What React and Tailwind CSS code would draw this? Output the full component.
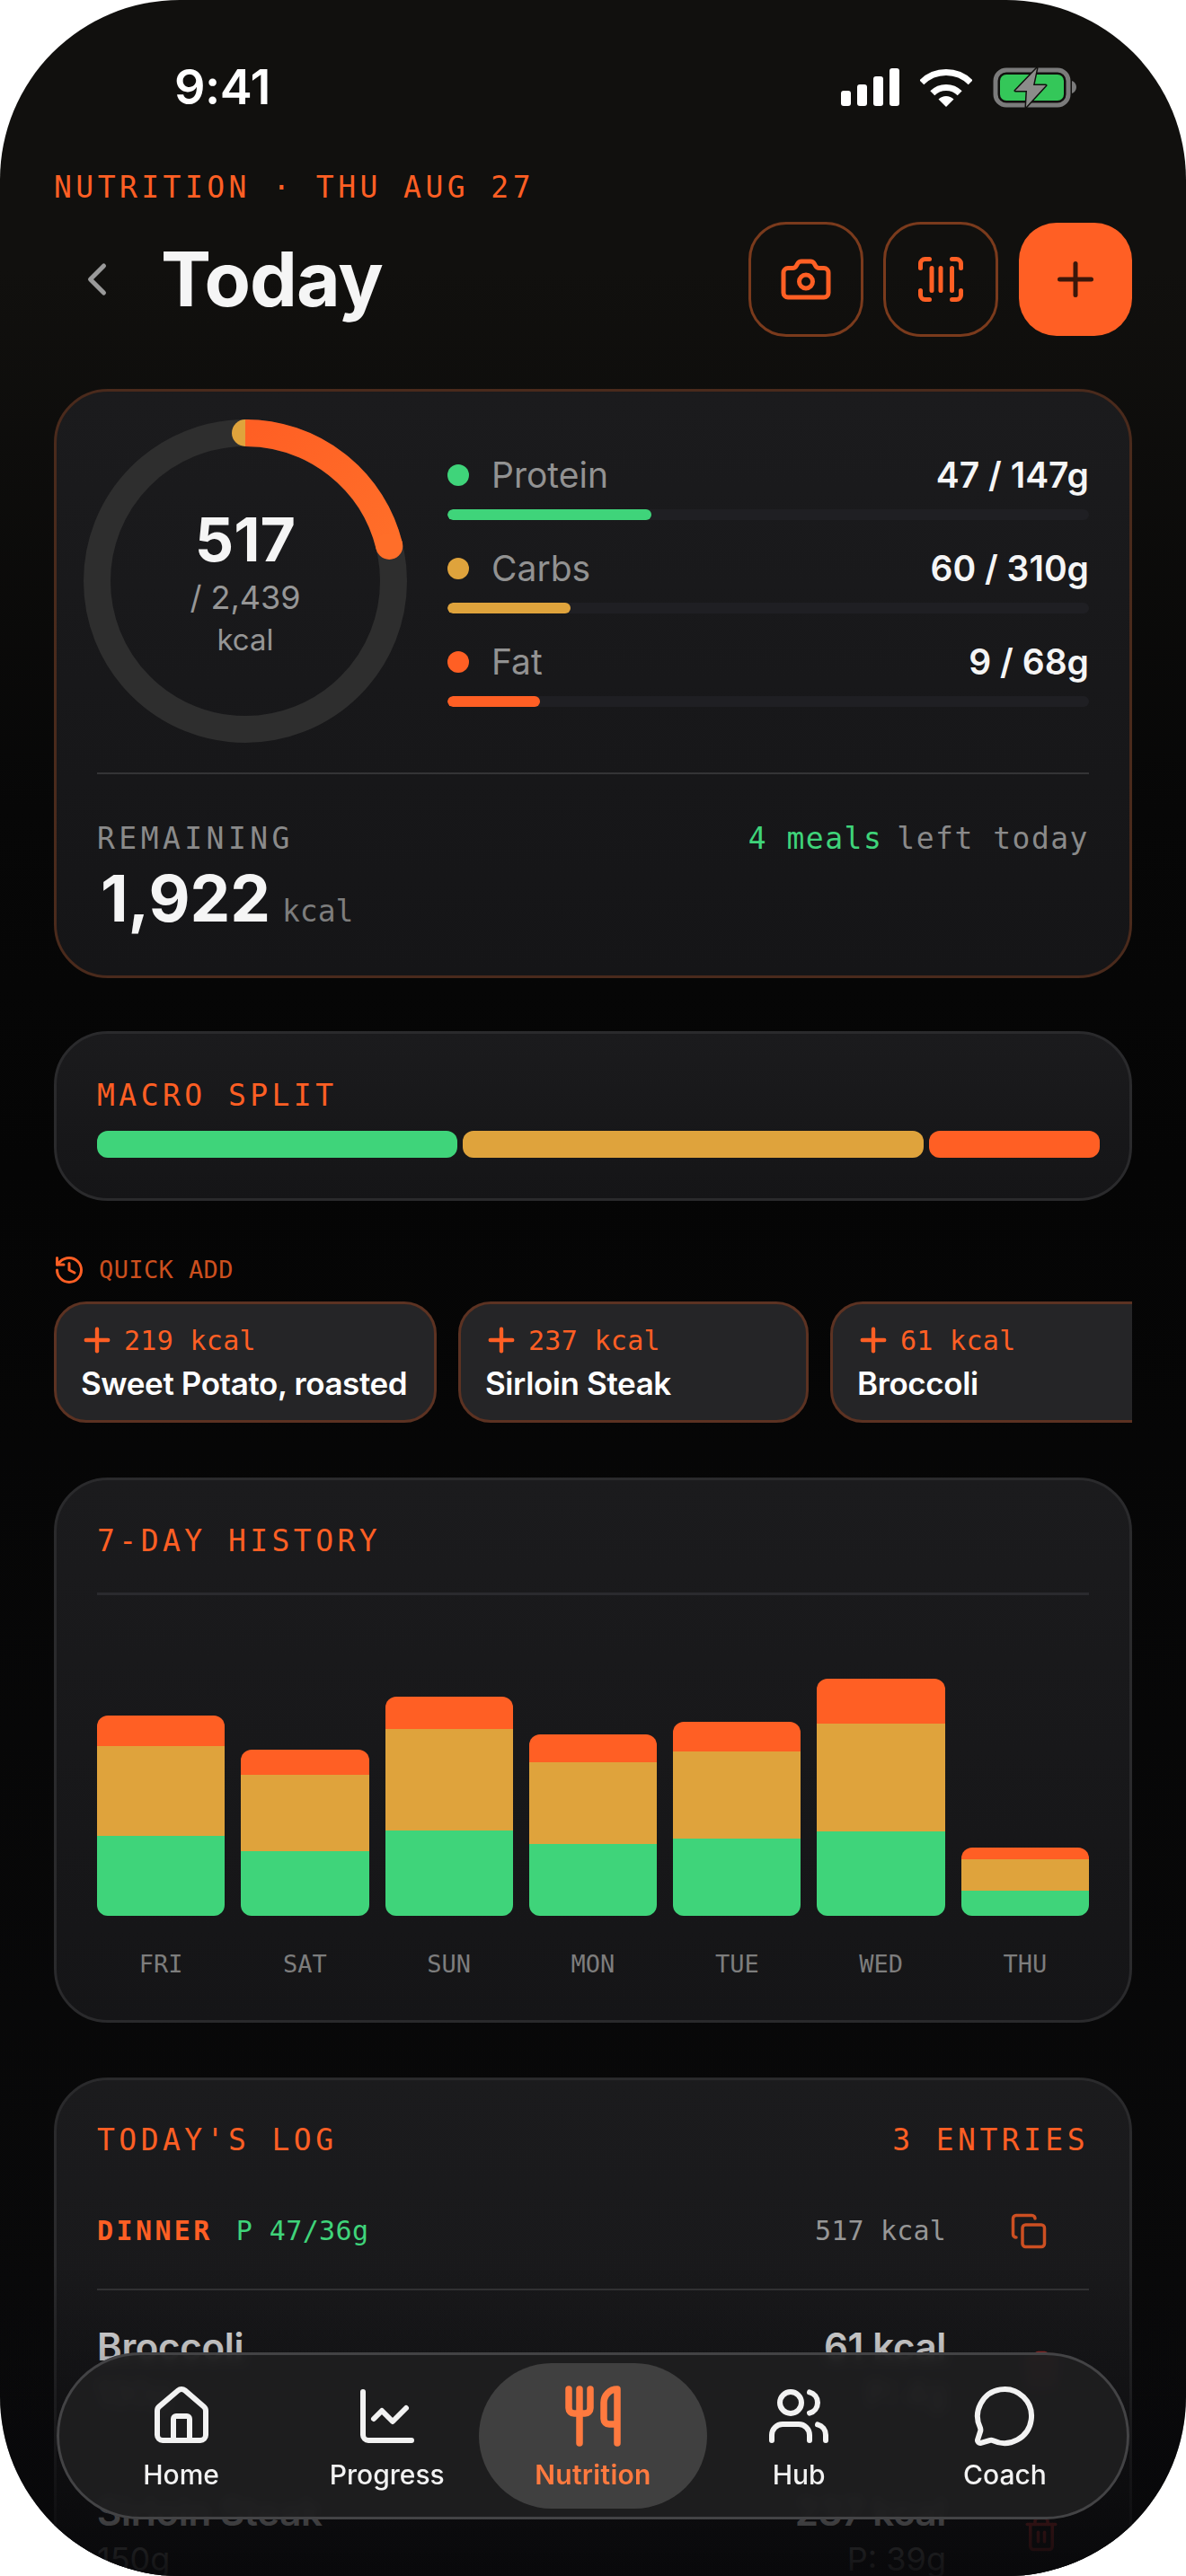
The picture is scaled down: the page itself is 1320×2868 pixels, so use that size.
import React from "react";
import { ChevronLeft, Camera, ScanBarcode, Plus, History, Copy, Trash2, House, ChartLine, Utensils, Users, MessageCircle } from "lucide-react";

const macros = [
  { name: "Protein", value: "47 / 147g", dot: "bg-[#3fd47a]", w: 227 },
  { name: "Carbs", value: "60 / 310g", dot: "bg-[#dfa33c]", w: 137 },
  { name: "Fat", value: "9 / 68g", dot: "bg-[#ff5f24]", w: 103 },
];

const chips = [
  { kcal: "219 kcal", name: "Sweet Potato, roasted", w: 426 },
  { kcal: "237 kcal", name: "Sirloin Steak", w: 390 },
  { kcal: "61 kcal", name: "Broccoli", w: 390 },
];

const days = [
  { d: "FRI", o: 34, a: 100, g: 89 },
  { d: "SAT", o: 28, a: 85, g: 72 },
  { d: "SUN", o: 36, a: 113, g: 95 },
  { d: "MON", o: 31, a: 91, g: 80 },
  { d: "TUE", o: 33, a: 97, g: 86 },
  { d: "WED", o: 50, a: 120, g: 94 },
  { d: "THU", o: 13, a: 35, g: 28 },
];

const tabs = [
  { label: "Home", Icon: House },
  { label: "Progress", Icon: ChartLine },
  { label: "Nutrition", Icon: Utensils, active: true },
  { label: "Hub", Icon: Users },
  { label: "Coach", Icon: MessageCircle },
];

function StatusIcons() {
  return (
    <div className="flex items-center">
      <svg width="65" height="42" viewBox="0 0 65 42" fill="#fff">
        <rect x="0" y="25" width="11" height="17" rx="3" />
        <rect x="18" y="18" width="11" height="24" rx="3" />
        <rect x="36" y="9" width="11" height="33" rx="3" />
        <rect x="54" y="0" width="11" height="42" rx="3" />
      </svg>
      <svg className="ml-[23px]" width="58" height="43" viewBox="0 0 58 43" fill="none">
        <path d="M1.8 15.8 A38.5 38.5 0 0 1 56.2 15.8" stroke="#fff" strokeWidth="7" />
        <path d="M13.8 27.8 A21.5 21.5 0 0 1 44.2 27.8" stroke="#fff" strokeWidth="7" />
        <path d="M29 43 L20.5 34.5 A12 12 0 0 1 37.5 34.5 Z" fill="#fff" />
      </svg>
      <svg className="ml-[23px]" width="93" height="46" viewBox="0 0 93 46" fill="none">
        <rect x="3" y="4" width="81" height="39" rx="12" stroke="#7b7b7b" strokeWidth="5" />
        <rect x="8" y="9" width="71" height="29" rx="7" fill="#34c759" />
        <path d="M88 16 C91 17 93 20 93 23 C93 26 91 29 88 30 Z" fill="#7b7b7b" />
        <path d="M49 2 L25 27 L38 27 L37 45 L59 21 L45 21 Z" fill="#8c8c8a" stroke="#11100e" strokeWidth="3" strokeLinejoin="round" paintOrder="stroke" />
      </svg>
    </div>
  );
}

function Ring() {
  return (
    <div className="relative w-[360px] h-[360px] ml-[-15px] shrink-0">
      <svg width="360" height="360" viewBox="0 0 360 360" fill="none">
        <defs>
          <linearGradient id="arc" gradientUnits="userSpaceOnUse" x1="180" y1="15" x2="340" y2="141">
            <stop offset="0" stopColor="#ff5f24" />
            <stop offset="1" stopColor="#ff6e29" />
          </linearGradient>
        </defs>
        <circle cx="180" cy="180" r="165" stroke="#2e2e2e" strokeWidth="30" />
        <circle cx="180" cy="15" r="15" fill="#dfa33c" />
        <path d="M180 15 A165 165 0 0 1 340.3 140.9" stroke="url(#arc)" strokeWidth="30" />
        <circle cx="340.3" cy="140.9" r="15" fill="#ff6e29" />
      </svg>
      <div className="absolute inset-0 flex flex-col items-center justify-center">
        <div className="h-[72px] leading-[72px] text-[68px] font-bold text-[#f5f5f5]">517</div>
        <div className="mt-[9px] h-[40px] leading-[40px] text-[36px] text-[#969696]">/ 2,439</div>
        <div className="mt-[9px] h-[36px] leading-[36px] text-[33px] text-[#969696]">kcal</div>
      </div>
    </div>
  );
}

function Card({ className = "", children }) {
  return (
    <div className={"rounded-[60px] border-[3px] bg-gradient-to-b from-[#1b1b1d] to-[#151517] " + className}>{children}</div>
  );
}

const label = "font-['DejaVu_Sans_Mono',monospace] text-[33px] leading-[30px] h-[28px] tracking-[4.45px] text-[#ff5f24] whitespace-nowrap";

export default function App() {
  return (
    <div className="relative w-[1320px] h-[2868px] overflow-hidden rounded-[200px] bg-[linear-gradient(180deg,#11100e_0px,#11100e_300px,#070707_900px,#050505_1300px,#0a0a0b_100%)] font-['Inter',sans-serif]">
      {/* status bar */}
      <div className="h-[194px] flex items-center justify-between pl-[194px] pr-[122px]">
        <div className="text-[54px] font-semibold tracking-[-0.5px] text-white leading-none">9:41</div>
        <StatusIcons />
      </div>

      <div className="px-[60px]">
        <div className={label}>NUTRITION · THU AUG 27</div>

        {/* header */}
        <div className="mt-[25px] h-[128px] flex items-center">
          <ChevronLeft size={60} strokeWidth={2} className="ml-[18px] text-[#9a9a9a] shrink-0" />
          <div className="ml-[41px] text-[84px] leading-none font-bold tracking-[-1px] text-[#f5f5f5]">Today</div>
          <div className="ml-auto flex items-center gap-[22px]">
            <button className="w-[128px] h-[128px] rounded-[42px] border-[3px] border-[#7a3a1c] flex items-center justify-center text-[#ff5f24]">
              <Camera size={60} strokeWidth={2} />
            </button>
            <button className="w-[128px] h-[128px] rounded-[42px] border-[3px] border-[#7a3a1c] flex items-center justify-center text-[#ff5f24]">
              <ScanBarcode size={60} strokeWidth={2} />
            </button>
            <button className="w-[126px] h-[126px] ml-[1px] rounded-[42px] bg-[#ff5f24] flex items-center justify-center text-[#3a170a]">
              <Plus size={60} strokeWidth={2} />
            </button>
          </div>
        </div>

        {/* hero */}
        <Card className="mt-[58px] h-[656px] border-[#4a2a1c] px-[45px] pt-[31px]">
          <div className="flex h-[360px]">
            <Ring />
            <div className="flex-1 ml-[45px] flex flex-col justify-center gap-[32px]">
              {macros.map((m) => (
                <div key={m.name}>
                  <div className="h-[44px] flex items-center">
                    <span className={"w-[24px] h-[24px] rounded-full " + m.dot} />
                    <span className="ml-[25px] text-[39px] text-[#929292]">{m.name}</span>
                    <span className="ml-auto text-[39px] font-semibold text-[#f5f5f5]">{m.value}</span>
                  </div>
                  <div className="mt-[16px] h-[12px] rounded-full bg-[#1f1f23] overflow-hidden">
                    <div className={"h-full rounded-full " + m.dot} style={{ width: m.w }} />
                  </div>
                </div>
              ))}
            </div>
          </div>
          <div className="mt-[33px] h-[2px] bg-[#343436]" />
          <div className="mt-[52px] flex items-center h-[40px] leading-[42px] font-['DejaVu_Sans_Mono',monospace] text-[33px] whitespace-nowrap">
            <span className="tracking-[4.45px] text-[#8a8a8a]">REMAINING</span>
            <span className="ml-auto tracking-[1.5px] text-[#3fd47a]">4 meals</span>
            <span className="ml-[16px] tracking-[1.5px] text-[#8a8a8a]">left today</span>
          </div>
          <div className="mt-[10px] flex items-baseline h-[72px]">
            <span className="ml-[4px] text-[71px] leading-[72px] font-bold text-[#f5f5f5]">1,922</span>
            <span className="ml-[13px] font-['DejaVu_Sans_Mono',monospace] text-[33px] text-[#7d7d7d]">kcal</span>
          </div>
        </Card>

        {/* macro split */}
        <Card className="mt-[59px] h-[189px] border-[#2a2a2c] px-[45px] pt-[54px]">
          <div className={label}>MACRO SPLIT</div>
          <div className="mt-[26px] flex w-[1116px] h-[30px] gap-[6px]">
            <div className="w-[401px] rounded-[12px] bg-[#3fd47a]" />
            <div className="w-[513px] rounded-[12px] bg-[#dfa33c]" />
            <div className="w-[190px] rounded-[12px] bg-[#ff5f24]" />
          </div>
        </Card>

        {/* quick add */}
        <div className="mt-[59px] h-[36px] flex items-center">
          <History size={36} strokeWidth={2} className="text-[#ff5f24] shrink-0 -ml-[1px]" />
          <span className="ml-[15px] font-['DejaVu_Sans_Mono',monospace] text-[27px] tracking-[0.4px] text-[#cc4f1e]">QUICK ADD</span>
        </div>
        <div className="mt-[17px] flex gap-[24px] overflow-hidden">
          {chips.map((c) => (
            <div key={c.name} style={{ width: c.w }} className="shrink-0 h-[135px] rounded-[36px] border-[3px] border-[#5c3222] bg-[#252527] pl-[27px] pt-[19px]">
              <div className="h-[42px] flex items-center">
                <Plus size={42} strokeWidth={2.5} className="text-[#ff5f24] -ml-[3px] shrink-0" />
                <span className="ml-[9px] font-['DejaVu_Sans_Mono',monospace] text-[30px] tracking-[0.3px] text-[#ff5f24]">{c.kcal}</span>
              </div>
              <div className="mt-[7px] h-[40px] leading-[40px] text-[35px] font-semibold tracking-[-0.4px] text-white whitespace-nowrap">{c.name}</div>
            </div>
          ))}
        </div>

        {/* history */}
        <Card className="mt-[61px] h-[607px] border-[#2a2a2c] px-[45px] pt-[53px]">
          <div className={label}>7-DAY HISTORY</div>
          <div className="mt-[44px] h-[3px] bg-[#2a2a2e]" />
          <div className="h-[357px] flex items-end gap-[18px]">
            {days.map((b) => (
              <div key={b.d} className="flex-1 rounded-[12px] overflow-hidden flex flex-col">
                <div className="bg-[#ff5f24]" style={{ height: b.o }} />
                <div className="bg-[#dfa33c]" style={{ height: b.a }} />
                <div className="bg-[#3fd47a]" style={{ height: b.g }} />
              </div>
            ))}
          </div>
          <div className="mt-[39px] flex gap-[18px]">
            {days.map((b) => (
              <div key={b.d} className="flex-1 text-center h-[30px] leading-[30px] font-['DejaVu_Sans_Mono',monospace] text-[27px] text-[#7d7d7d]">{b.d}</div>
            ))}
          </div>
        </Card>

        {/* log */}
        <Card className="mt-[61px] h-[700px] border-[#2a2a2c] px-[45px] pt-[52px]">
          <div className="flex justify-between">
            <div className={label}>TODAY'S LOG</div>
            <div className={label}>3 ENTRIES</div>
          </div>
          <div className="mt-[56px] h-[60px] pt-[3px] flex items-center font-['DejaVu_Sans_Mono',monospace] text-[30px]">
            <span className="font-bold tracking-[3.4px] text-[#ff5f24]">DINNER</span>
            <span className="ml-[26px] tracking-[0.4px] text-[#3fd47a]">P 47/36g</span>
            <span className="ml-auto tracking-[0.2px] text-[#969696]">517 kcal</span>
            <Copy size={42} strokeWidth={2} className="ml-[71px] mr-[46px] text-[#cc4f22] shrink-0" />
          </div>
          <div className="mt-[36px] h-[2px] bg-[#343436]" />
          {[
            { n: "Broccoli", k: "61 kcal", g: "130g", p: "P: 4g" },
            { n: "Sirloin Steak", k: "237 kcal", g: "150g", p: "P: 39g" },
          ].map((r) => (
            <div key={r.n} className="pt-[39px] pb-[49px] flex items-center">
              <div className="flex-1">
                <div className="h-[48px] leading-[48px] text-[42px] font-semibold tracking-[-0.3px] text-[#f5f5f5]">{r.n}</div>
                <div className="mt-[8px] h-[40px] leading-[40px] text-[36px] text-[#999]">{r.g}</div>
              </div>
              <div className="text-right">
                <div className="h-[48px] leading-[48px] text-[42px] font-semibold tracking-[-0.3px] text-[#f5f5f5]">{r.k}</div>
                <div className="mt-[8px] h-[40px] leading-[40px] text-[36px] text-[#999]">{r.p}</div>
              </div>
              <Trash2 size={42} strokeWidth={2} className="ml-[85px] mr-[32px] text-[#b03030] shrink-0" />
            </div>
          ))}
        </Card>
      </div>

      {/* fade above the tab bar content */}
      <div className="absolute left-0 right-0 bottom-0 h-[348px] bg-gradient-to-b from-[#08080a00] to-[#08080aee]" />

      {/* tab bar */}
      <div className="absolute left-[63px] bottom-[63px] w-[1194px] h-[186px] rounded-[93px] border-[3px] border-[#434345] bg-[#1f1f20e8] backdrop-blur-[6px] px-[21px] flex">
        {tabs.map(({ label: l, Icon, active }) => (
          <div key={l} className="relative flex-1 flex flex-col items-center pt-[32px]">
            {active && <div className="absolute top-[9px] -left-[12px] -right-[12px] h-[162px] rounded-[81px] bg-[#404040]" />}
            <Icon size={72} strokeWidth={active ? 2.5 : 2} className={"relative " + (active ? "text-[#ff7a3f]" : "text-[#f2f2f2]")} />
            <div className={"relative mt-[11px] h-[36px] leading-[36px] text-[30px] " + (active ? "font-semibold tracking-[0.3px] text-[#ff7a3f]" : "font-medium text-[#f2f2f2]")}>{l}</div>
          </div>
        ))}
      </div>
    </div>
  );
}
